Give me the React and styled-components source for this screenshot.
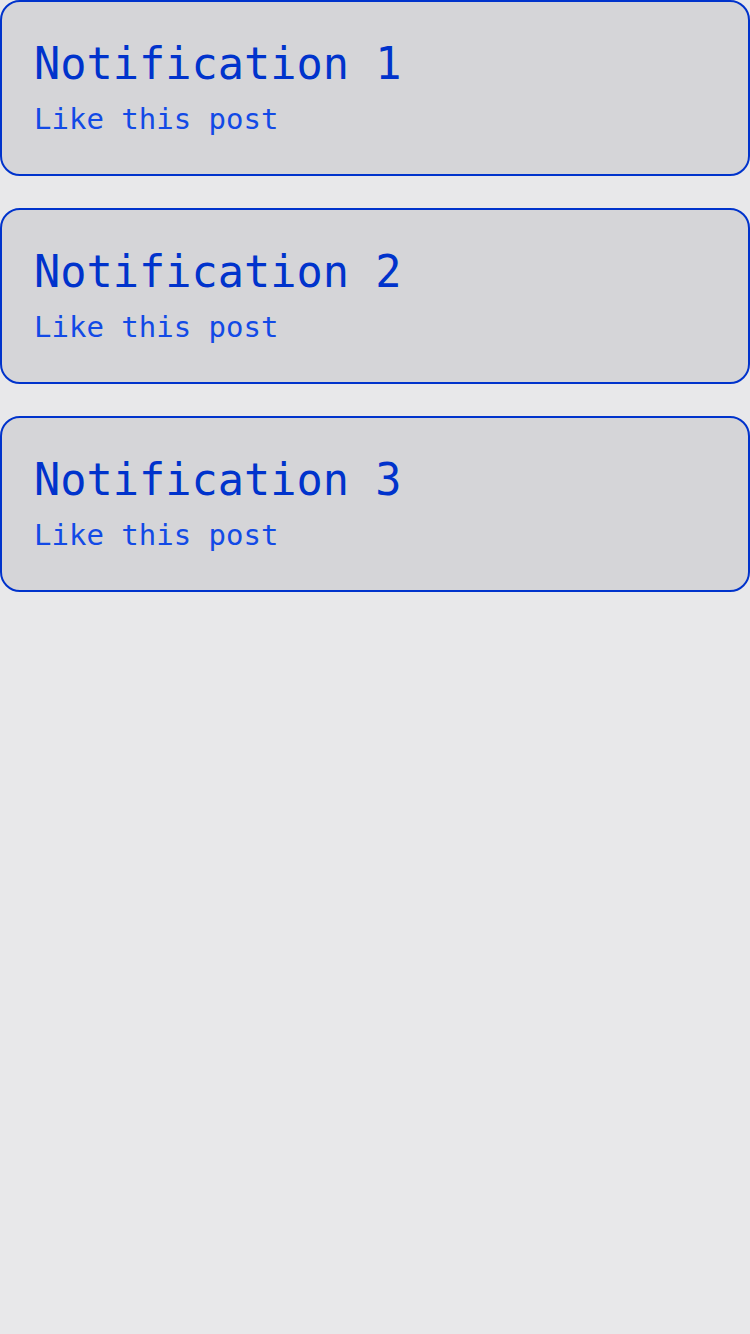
import React from "react";
import styled, { createGlobalStyle } from "styled-components";

const GlobalStyle = createGlobalStyle`
  html, body {
    margin: 0;
    padding: 0;
    background-color: #e8e8ea;
  }
  body {
    min-height: 1334px;
    font-family: "DejaVu Sans Mono", "Liberation Mono", monospace;
  }
`;

const List = styled.ul`
  display: flex;
  flex-direction: column;
  gap: 32px;
  margin: 0;
  padding: 0;
  list-style: none;
`;

const Card = styled.li`
  box-sizing: border-box;
  height: 176px;
  padding: 37px 32px 0;
  border: 2px solid #0033cc;
  border-radius: 20px;
  background-color: #d5d5d8;
`;

const Title = styled.h2`
  margin: 0;
  font-size: 43.6px;
  font-weight: normal;
  line-height: 51px;
  color: #0033cc;
`;

const Message = styled.p`
  margin: 12px 0 0;
  font-size: 29px;
  line-height: 34px;
  color: #124ae6;
`;

const notifications = [
  { id: 1, title: "Notification 1", message: "Like this post" },
  { id: 2, title: "Notification 2", message: "Like this post" },
  { id: 3, title: "Notification 3", message: "Like this post" },
];

const App = () => {
  return (
    <>
      <GlobalStyle />
      <List>
        {notifications.map((item) => (
          <Card key={item.id}>
            <Title>{item.title}</Title>
            <Message>{item.message}</Message>
          </Card>
        ))}
      </List>
    </>
  );
};

export default App;
